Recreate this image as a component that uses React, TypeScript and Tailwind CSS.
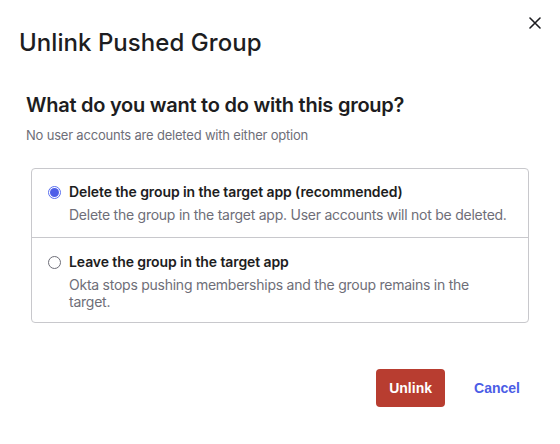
import React from "react";

export default function App() {
  return (
    <div className="w-[560px] h-[444px] bg-white relative" style={{ fontFamily: "Inter, 'Noto Sans', sans-serif" }}>
      <button className="absolute left-[528px] top-[16px] w-[14px] h-[14px] flex items-center justify-center text-[#1d1d21]">
        <svg width="12" height="12" viewBox="0 0 12 12" fill="none">
          <path d="M1 1L11 11M11 1L1 11" stroke="#1d1d21" strokeWidth="1.6" strokeLinecap="round" />
        </svg>
      </button>
      <div className="pt-[28px] pl-[19px]">
        <h1 className="text-[24px] leading-[30px] font-medium text-[#1d1d21] tracking-[0.05px]">Unlink Pushed Group</h1>
      </div>
      <div className="pl-[26px] pt-[34px] pr-[31px]">
        <h2 className="text-[20px] leading-[26px] font-semibold text-[#1d1d21] tracking-[-0.25px]">What do you want to do with this group?</h2>
        <p className="mt-[9px] text-[13px] leading-[16px] text-[#6e6e78] tracking-[-0.2px]">No user accounts are deleted with either option</p>
        <div className="mt-[25px] ml-[5px] border border-[#c8c8cc] rounded-[4px] flex flex-col">
          <label className="flex gap-[8px] pl-[16px] pr-[12px] pt-[14px] pb-[14px] border-b border-[#c8c8cc]">
            <span className="mt-[3px] w-[13px] h-[13px] rounded-full border border-[#5a6ff0] flex items-center justify-center shrink-0">
              <span className="w-[9px] h-[9px] rounded-full bg-[#4d5ee8]" />
            </span>
            <span className="flex flex-col">
              <span className="text-[14px] leading-[18px] font-semibold text-[#1d1d21] tracking-[-0.1px]">Delete the group in the target app (recommended)</span>
              <span className="mt-[5px] text-[14px] leading-[17px] text-[#6e6e78] tracking-[-0.25px] whitespace-nowrap">Delete the group in the target app. User accounts will not be deleted.</span>
            </span>
          </label>
          <label className="flex gap-[8px] pl-[16px] pr-[40px] pt-[15px] pb-[12px]">
            <span className="mt-[3px] w-[13px] h-[13px] rounded-full border border-[#6e6e78] shrink-0" />
            <span className="flex flex-col">
              <span className="text-[14px] leading-[18px] font-semibold text-[#1d1d21] tracking-[-0.1px]">Leave the group in the target app</span>
              <span className="mt-[5px] text-[14px] leading-[17px] text-[#6e6e78] tracking-[-0.25px]">Okta stops pushing memberships and the group remains in the target.</span>
            </span>
          </label>
        </div>
      </div>
      <div className="flex items-center justify-end pr-[40px] pt-[46px] gap-[29px]">
        <button className="w-[69px] h-[38px] rounded-[4px] bg-[#b83d30] text-white text-[14px] font-bold" style={{ fontFamily: "'Liberation Sans', Arial, sans-serif" }}>Unlink</button>
        <button className="text-[14px] font-bold text-[#4b5de6]" style={{ fontFamily: "'Liberation Sans', Arial, sans-serif" }}>Cancel</button>
      </div>
    </div>
  );
}
